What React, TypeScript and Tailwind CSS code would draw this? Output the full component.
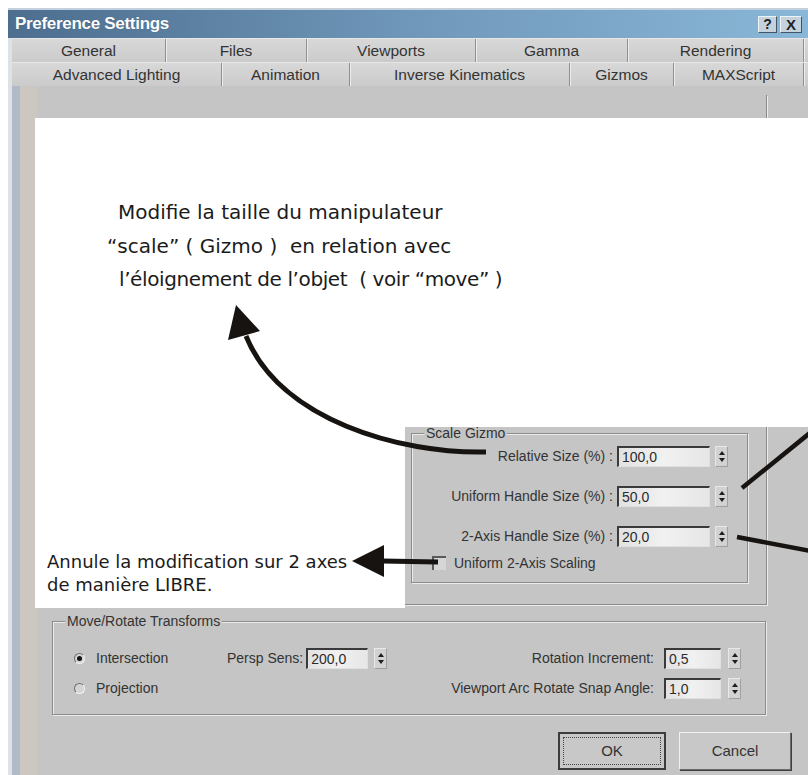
import React from "react";

const ui = "font-['Liberation_Sans',Arial,sans-serif]";
const hand = "font-['DejaVu_Sans','Open_Sans',sans-serif]";

const topTabs = [
  { label: "General", w: "w-[154px]" },
  { label: "Files", w: "w-[141px]" },
  { label: "Viewports", w: "w-[169px]" },
  { label: "Gamma", w: "w-[152px]" },
  { label: "Rendering", w: "w-[176px]" },
];

const frontTabs = [
  { label: "Advanced Lighting", w: "w-[210px]" },
  { label: "Animation", w: "w-[128px]" },
  { label: "Inverse Kinematics", w: "w-[220px]" },
  { label: "Gizmos", w: "w-[104px]" },
  { label: "MAXScript", w: "w-[130px]" },
];

function TabRow({ tabs }: { tabs: { label: string; w: string }[] }) {
  return (
    <div className="flex h-[24px] border-t border-t-[#e6e6e6] bg-gradient-to-b from-[#d8d8d8] to-[#cbcbcb]">
      {tabs.map((t) => (
        <div
          key={t.label}
          className={`${t.w} flex items-center justify-center border-r border-r-[#8f8f8f] shadow-[1px_0_0_#ececec] text-[15.5px] text-[#333]`}
        >
          {t.label}
        </div>
      ))}
    </div>
  );
}

function Spinner() {
  return (
    <div className="flex h-[21px] w-[13px] flex-col items-center justify-center gap-[3px] border border-[#a0a0a0] border-t-[#e8e8e8] border-l-[#e8e8e8] bg-[#d2d2d2]">
      <span className="h-0 w-0 border-x-[3px] border-b-[4px] border-x-transparent border-b-[#1e1e1e]" />
      <span className="h-0 w-0 border-x-[3px] border-t-[4px] border-x-transparent border-t-[#1e1e1e]" />
    </div>
  );
}

function Field({ value, w }: { value: string; w: string }) {
  return (
    <div
      className={`${w} h-[21px] border-t-2 border-l-2 border-t-[#3a3a3a] border-l-[#3a3a3a] border-r border-b border-r-[#e0e0e0] border-b-[#e0e0e0] bg-gradient-to-r from-[#e2e2e2] via-[#f1f1f1] to-[#e6e6e6] pl-[3px] text-[14px] leading-[18px] text-[#2b2b2b]`}
    >
      {value}
    </div>
  );
}

function GroupBox({
  title,
  className,
  children,
}: {
  title: string;
  className: string;
  children: React.ReactNode;
}) {
  return (
    <div
      className={`relative border border-[#8c8c8c] shadow-[inset_1px_1px_0_#ebebeb,1px_1px_0_#ebebeb] ${className}`}
    >
      <span className="absolute -top-[9px] left-[12px] bg-[#c5c5c5] px-[2px] text-[14px] leading-[16px] text-[#333]">
        {title}
      </span>
      {children}
    </div>
  );
}

function SpinRow({ label, value }: { label: string; value: string }) {
  return (
    <div className="flex h-[21px] items-center justify-end pr-[19px]">
      <span className="text-[14px] text-[#333]">{label}</span>
      <div className="ml-[4px]">
        <Field value={value} w="w-[93px]" />
      </div>
      <div className="ml-[5px]">
        <Spinner />
      </div>
    </div>
  );
}

function Radio({ checked }: { checked?: boolean }) {
  return (
    <span className="flex h-[11px] w-[11px] items-center justify-center rounded-full border border-[#707070] border-b-[#f2f2f2] border-r-[#f2f2f2] bg-[#d4d4d4]">
      {checked && <span className="h-[5px] w-[5px] rounded-full bg-[#111]" />}
    </span>
  );
}

function Arrows() {
  return (
    <svg
      className="pointer-events-none absolute left-0 top-0"
      width="808"
      height="775"
      viewBox="0 0 808 775"
    >
      <g fill="none" stroke="#161310" strokeWidth="5" strokeLinecap="butt">
        <path d="M 486 452 C 400 454 280 420 246 336" />
        <path d="M 742 488 L 816 428" strokeWidth="4.5" />
        <path d="M 737 537 L 816 552" strokeWidth="4.5" />
        <path d="M 382 561 L 438 562" />
      </g>
      <g fill="#161310">
        <polygon points="236,305 228,340 260,331" />
        <polygon points="352,561 384,545 384,577" />
      </g>
    </svg>
  );
}

export default function App() {
  return (
    <div className={`relative h-[775px] w-[808px] overflow-hidden bg-white pl-[8px] pt-[8px] ${ui}`}>
      <div className="flex h-full flex-col">
        {/* title bar */}
        <div className="flex h-[30px] items-center border-t-2 border-t-[#c4d0dc] bg-gradient-to-r from-[#4d6e8e] via-[#6f97b9] to-[#8ab7d7] pl-[7px] pr-[6px]">
          <span className="text-[17px] font-bold tracking-[-0.3px] text-white [text-shadow:0_0_1px_#3a5670]">
            Preference Settings
          </span>
          <div className="ml-auto flex gap-[3px]">
            <div className="flex h-[17px] w-[19px] items-center justify-center border border-[#eef3f6] border-b-[#41566a] border-r-[#41566a] bg-[#c3d2dd] text-[14px] font-bold leading-none text-[#222]">
              ?
            </div>
            <div className="flex h-[17px] w-[22px] items-center justify-center border border-[#eef3f6] border-b-[#41566a] border-r-[#41566a] bg-[#c3d2dd] text-[15px] font-bold leading-none text-[#222]">
              X
            </div>
          </div>
        </div>

        <div className="flex flex-1">
          <div className="w-[4px] bg-[#dde2e6]" />
          <div className="flex flex-1 flex-col">
            <TabRow tabs={topTabs} />
            <TabRow tabs={frontTabs} />

            <div className="flex flex-1">
              <div className="w-[8px] bg-[#b1bbc5]" />
              <div className="w-[18px] bg-[#cdc7c1]" />
              <div className="flex flex-1 flex-col bg-[#c5c5c5] text-[#333]">
                {/* rollout with the scale gizmo group */}
                <div className="ml-[10px] mt-[9px] flex h-[510px] w-[719px] items-end justify-end border-b border-r border-b-[#8a8a8a] border-r-[#8a8a8a] pb-[21px] pr-[18px] shadow-[1px_1px_0_#ececec]">
                  <GroupBox title="Scale Gizmo" className="h-[150px] w-[337px]">
                    <div className="flex flex-col pt-[12px]">
                      <SpinRow label="Relative Size (%) :" value="100,0" />
                      <div className="mt-[19px]">
                        <SpinRow label="Uniform Handle Size (%) :" value="50,0" />
                      </div>
                      <div className="mt-[19px]">
                        <SpinRow label="2-Axis Handle Size (%) :" value="20,0" />
                      </div>
                      <div className="mt-[8px] flex h-[16px] items-center pl-[20px]">
                        <span className="h-[14px] w-[14px] border-t-2 border-l-2 border-t-[#5a5a5a] border-l-[#5a5a5a] bg-[#d6d6d6]" />
                        <span className="ml-[8px] text-[14px]">Uniform 2-Axis Scaling</span>
                      </div>
                    </div>
                  </GroupBox>
                </div>

                {/* move / rotate */}
                <GroupBox title="Move/Rotate Transforms" className="ml-[14px] mt-[16px] h-[94px] w-[714px]">
                  <div className="flex flex-col pt-[26px] text-[14px]">
                    <div className="flex h-[21px] items-center">
                      <div className="flex w-[174px] items-center pl-[21px]">
                        <Radio checked />
                        <span className="ml-[11px]">Intersection</span>
                      </div>
                      <span>Persp Sens:</span>
                      <div className="ml-[3px]">
                        <Field value="200,0" w="w-[62px]" />
                      </div>
                      <div className="ml-[6px]">
                        <Spinner />
                      </div>
                      <div className="ml-auto flex items-center pr-[24px]">
                        <span>Rotation Increment:</span>
                        <div className="ml-[10px]">
                          <Field value="0,5" w="w-[57px]" />
                        </div>
                        <div className="ml-[7px]">
                          <Spinner />
                        </div>
                      </div>
                    </div>
                    <div className="mt-[9px] flex h-[21px] items-center">
                      <div className="flex w-[174px] items-center pl-[21px]">
                        <Radio />
                        <span className="ml-[11px]">Projection</span>
                      </div>
                      <div className="ml-auto flex items-center pr-[24px]">
                        <span>Viewport Arc Rotate Snap Angle:</span>
                        <div className="ml-[10px]">
                          <Field value="1,0" w="w-[57px]" />
                        </div>
                        <div className="ml-[7px]">
                          <Spinner />
                        </div>
                      </div>
                    </div>
                  </div>
                </GroupBox>

                {/* dialog buttons */}
                <div className="ml-[520px] mt-[17px] flex gap-[13px] text-[15px]">
                  <div className="flex h-[38px] w-[108px] items-center justify-center border-2 border-[#3c3c3c] bg-[#c8c8c8] p-[3px]">
                    <div className="flex h-full w-full items-center justify-center border border-dotted border-[#444]">
                      OK
                    </div>
                  </div>
                  <div className="flex h-[38px] w-[112px] items-center justify-center border border-[#f0f0f0] border-b-[#6a6a6a] border-r-[#6a6a6a] bg-[#c8c8c8] shadow-[1px_1px_0_#404040]">
                    Cancel
                  </div>
                </div>
              </div>
            </div>
          </div>
        </div>
      </div>

      {/* annotation sheet laid over the dialog */}
      <div className={`absolute left-[35px] top-[118px] flex flex-col text-[#1b1b1b] ${hand}`}>
        <div className="h-[309px] w-[773px] bg-white pl-[72px] pt-[78px] text-[20px] leading-[33.5px]">
          <div className="pl-[11px]">Modifie la taille du manipulateur</div>
          <div className="whitespace-pre">“scale” ( Gizmo )  en relation avec</div>
          <div className="whitespace-pre pl-[12px] tracking-[-0.4px]">l’éloignement de l’objet  ( voir “move” )</div>
        </div>
        <div className="h-[181px] w-[370px] bg-white pl-[12px] pt-[123px] text-[18px] leading-[23px]">
          <div>Annule la modification sur 2 axes</div>
          <div>de manière LIBRE.</div>
        </div>
      </div>

      <Arrows />
    </div>
  );
}
